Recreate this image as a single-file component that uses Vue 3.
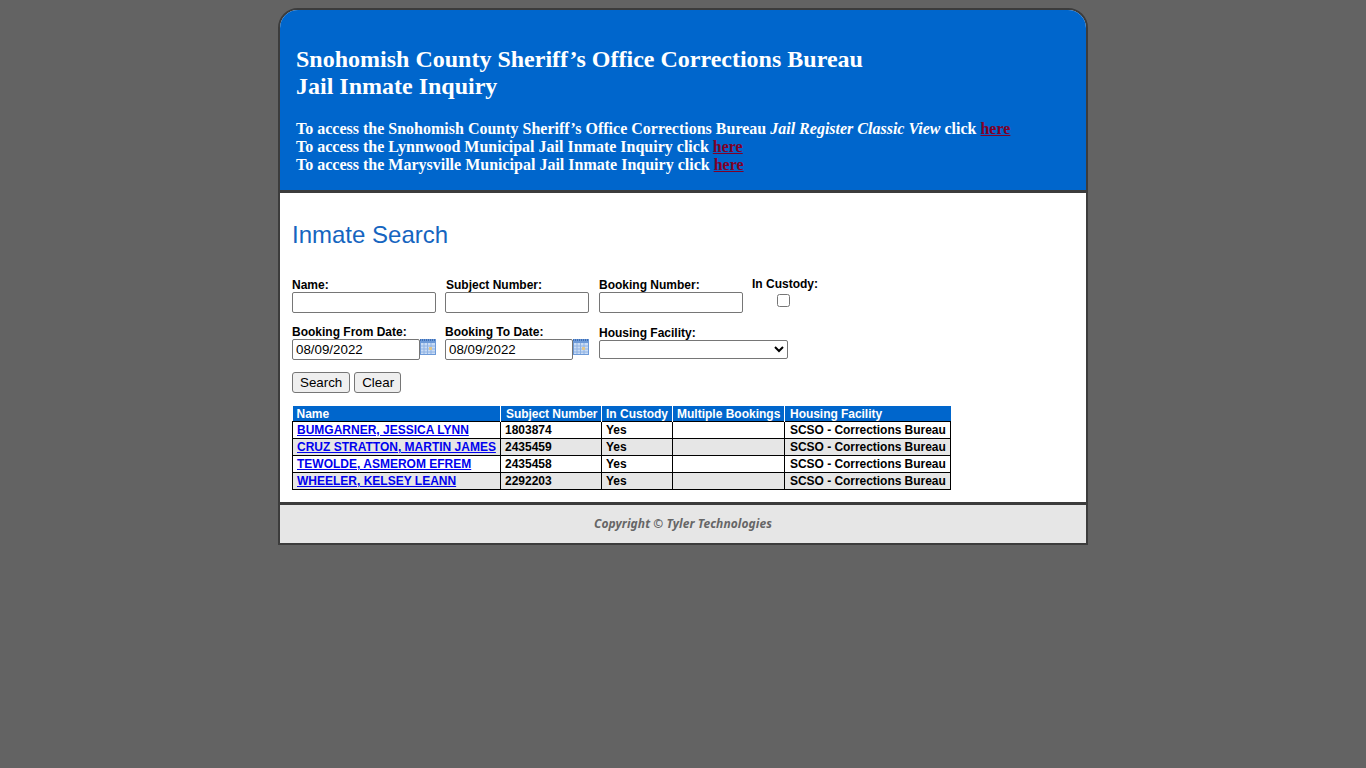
<script setup>
const rows = [
  { name: 'BUMGARNER, JESSICA LYNN', num: '1803874' },
  { name: 'CRUZ STRATTON, MARTIN JAMES', num: '2435459' },
  { name: 'TEWOLDE, ASMEROM EFREM', num: '2435458' },
  { name: 'WHEELER, KELSEY LEANN', num: '2292203' },
]
const links = [
  { id: 1, pre: 'To access the Snohomish County Sheriff’s Office Corrections Bureau ', em: 'Jail Register Classic View', post: ' click ' },
  { id: 2, pre: 'To access the Lynnwood Municipal Jail Inmate Inquiry click ', em: '', post: '' },
  { id: 3, pre: 'To access the Marysville Municipal Jail Inmate Inquiry click ', em: '', post: '' },
]
</script>

<template>
  <div class="page">
    <div class="frame">
      <header class="head">
        <h1>Snohomish County Sheriff’s Office Corrections Bureau<br />Jail Inmate Inquiry</h1>
        <div class="access">
          <div v-for="l in links" :key="l.id">{{ l.pre }}<em v-if="l.em">{{ l.em }}</em>{{ l.post }}<a href="#">here</a></div>
        </div>
      </header>
      <main class="body">
        <h2>Inmate Search</h2>
        <div class="row row1">
          <label class="field w1"><span>Name:</span><input type="text" /></label>
          <label class="field w2"><span class="nudge">Subject Number:</span><input type="text" /></label>
          <label class="field w3"><span>Booking Number:</span><input type="text" /></label>
          <label class="custody"><span>In Custody:</span><input type="checkbox" /></label>
        </div>
        <div class="row row2">
          <div class="field w1">
            <span>Booking From Date:</span>
            <div class="date">
              <input type="text" value="08/09/2022" />
              <svg width="16" height="16" viewBox="0 0 16 16" class="cal">
                <rect x="0" y="0" width="16" height="16" fill="#6d9ad8" />
                <path d="M0 1h16" stroke="#3f6fb5" stroke-width="2" stroke-dasharray="1 1" />
                <path d="M1 4h14v11H1z" fill="#c9dcf5" />
                <path d="M1 7h14M1 10h14M1 13h14M4 4v11M7.500 4v11M11 4v11" stroke="#8fb2e3" stroke-width="1" fill="none" />
                <rect x="9" y="8" width="3" height="3" fill="#e0c68c" />
              </svg>
            </div>
          </div>
          <div class="field w2">
            <span>Booking To Date:</span>
            <div class="date">
              <input type="text" value="08/09/2022" />
              <svg width="16" height="16" viewBox="0 0 16 16" class="cal">
                <rect x="0" y="0" width="16" height="16" fill="#6d9ad8" />
                <path d="M0 1h16" stroke="#3f6fb5" stroke-width="2" stroke-dasharray="1 1" />
                <path d="M1 4h14v11H1z" fill="#c9dcf5" />
                <path d="M1 7h14M1 10h14M1 13h14M4 4v11M7.500 4v11M11 4v11" stroke="#8fb2e3" stroke-width="1" fill="none" />
                <rect x="9" y="8" width="3" height="3" fill="#e0c68c" />
              </svg>
            </div>
          </div>
          <label class="field facility">
            <span>Housing Facility:</span>
            <select><option></option></select>
          </label>
        </div>
        <div class="buttons">
          <button type="button">Search</button>
          <button type="button" class="clear">Clear</button>
        </div>
        <table>
          <colgroup>
            <col class="c1" /><col class="c2" /><col class="c3" /><col class="c4" /><col class="c5" />
          </colgroup>
          <thead>
            <tr>
              <th>Name</th><th class="shift">Subject Number</th><th>In Custody</th><th>Multiple Bookings</th><th class="shift">Housing Facility</th>
            </tr>
          </thead>
          <tbody>
            <tr v-for="r in rows" :key="r.num">
              <td><a href="#">{{ r.name }}</a></td>
              <td>{{ r.num }}</td>
              <td>Yes</td>
              <td></td>
              <td class="shift">SCSO - Corrections Bureau</td>
            </tr>
          </tbody>
        </table>
      </main>
      <footer class="foot">Copyright © Tyler Technologies</footer>
    </div>
  </div>
</template>

<style>
html, body { background: #636363; }
</style>

<style scoped>
.page {
  min-height: 768px;
  background: #636363;
  padding-top: 8px;
  box-sizing: border-box;
}
.frame {
  width: 810px;
  margin: 0 auto;
  box-sizing: border-box;
  border: 2px solid #3c3c3c;
  border-top-left-radius: 20px;
  border-top-right-radius: 20px;
  background: #fff;
  overflow: hidden;
}
.head {
  height: 180px;
  box-sizing: border-box;
  background: #0066cc;
  color: #fff;
  font-family: "Liberation Serif", "Times New Roman", serif;
  font-weight: bold;
  padding: 36px 16px 0;
}
.head h1 {
  margin: 0;
  font-size: 24px;
  line-height: 27px;
  font-weight: bold;
}
.access {
  margin-top: 20px;
  font-size: 16px;
  line-height: 18px;
}
.access a { color: #800028; }
.body {
  border-top: 3px solid #3c3c3c;
  height: 309px;
  box-sizing: content-box;
  padding: 0 12px;
  font-family: "Liberation Sans", Arial, sans-serif;
}
.body h2 {
  margin: 0;
  padding-top: 28px;
  font-size: 24px;
  line-height: 28px;
  font-weight: normal;
  color: #1565c0;
}
.row { display: flex; align-items: flex-start; }
.row1 { margin-top: 29px; height: 47px; }
.row2 { height: 47px; }
.field { display: flex; flex-direction: column; }
.field span, .custody span {
  font-size: 12px;
  font-weight: bold;
  line-height: 14px;
  color: #000;
}
.w1 { width: 153px; }
.w2 { width: 154px; }
.w3 { width: 153px; }
.nudge { padding-left: 1px; }
input[type="text"] {
  width: 144px;
  height: 21px;
  box-sizing: border-box;
  border: 1px solid #767676;
  border-radius: 2px;
  padding: 1px 2px 1px 3px;
  font-family: "Liberation Sans", Arial, sans-serif;
  font-size: 13.333px;
  background: #fff;
  margin: 0;
}
.date { display: flex; align-items: flex-start; }
.date input[type="text"] { width: 128px; }
.cal { display: block; }
.custody {
  display: flex;
  flex-direction: column;
  align-items: center;
  width: 66px;
  margin-top: -1px;
}
.custody input { margin: 3px 3px 0 0; width: 13px; height: 13px; }
.facility { padding-top: 1px; }
.facility select {
  width: 189px;
  height: 19px;
  font-size: 13.333px;
  font-family: "Liberation Sans", Arial, sans-serif;
  box-sizing: border-box;
  border: 1px solid #767676;
  border-radius: 2px;
  background: #fff;
  margin: 0;
}
.buttons { display: flex; gap: 4px; }
.buttons button {
  height: 21px;
  box-sizing: border-box;
  padding: 1px 7px;
  font-family: "Liberation Sans", Arial, sans-serif;
  font-size: 13.333px;
  border: 1px solid #767676;
  border-radius: 3px;
  background: #efefef;
  color: #000;
}
.buttons .clear { padding: 1px 6px 1px 7px; }
table {
  margin-top: 13px;
  border-collapse: collapse;
  table-layout: fixed;
  width: 659px;
  font-size: 12px;
  font-weight: bold;
  line-height: 14px;
}
.c1 { width: 208px; }
.c2 { width: 101px; }
.c3 { width: 71px; }
.c4 { width: 112px; }
.c5 { width: 166px; }
th {
  background: #0066cc;
  color: #fff;
  text-align: left;
  padding: 1px 4px 0;
  height: 15px;
  box-sizing: border-box;
  border-left: 1px solid #fff;
  white-space: nowrap;
}
th:first-child { border-left: 0; }
td {
  border: 1px solid #000;
  padding: 1px 4px;
  height: 17px;
  box-sizing: border-box;
  white-space: nowrap;
  color: #000;
}
th.shift, td.shift { padding-left: 5px; padding-right: 0; letter-spacing: -0.04px; }
tbody tr:nth-child(even) td { background: #e6e6e6; }
td a { color: #0000ee; }
.foot {
  border-top: 3px solid #3c3c3c;
  height: 38px;
  box-sizing: content-box;
  background: #e6e6e6;
  display: flex;
  align-items: center;
  justify-content: center;
  padding-bottom: 0;
  line-height: 36px;
  font-family: "Noto Sans", Verdana, sans-serif;
  font-size: 12px;
  letter-spacing: 0.07px;
  font-style: italic;
  font-weight: bold;
  color: #666666;
}
</style>
